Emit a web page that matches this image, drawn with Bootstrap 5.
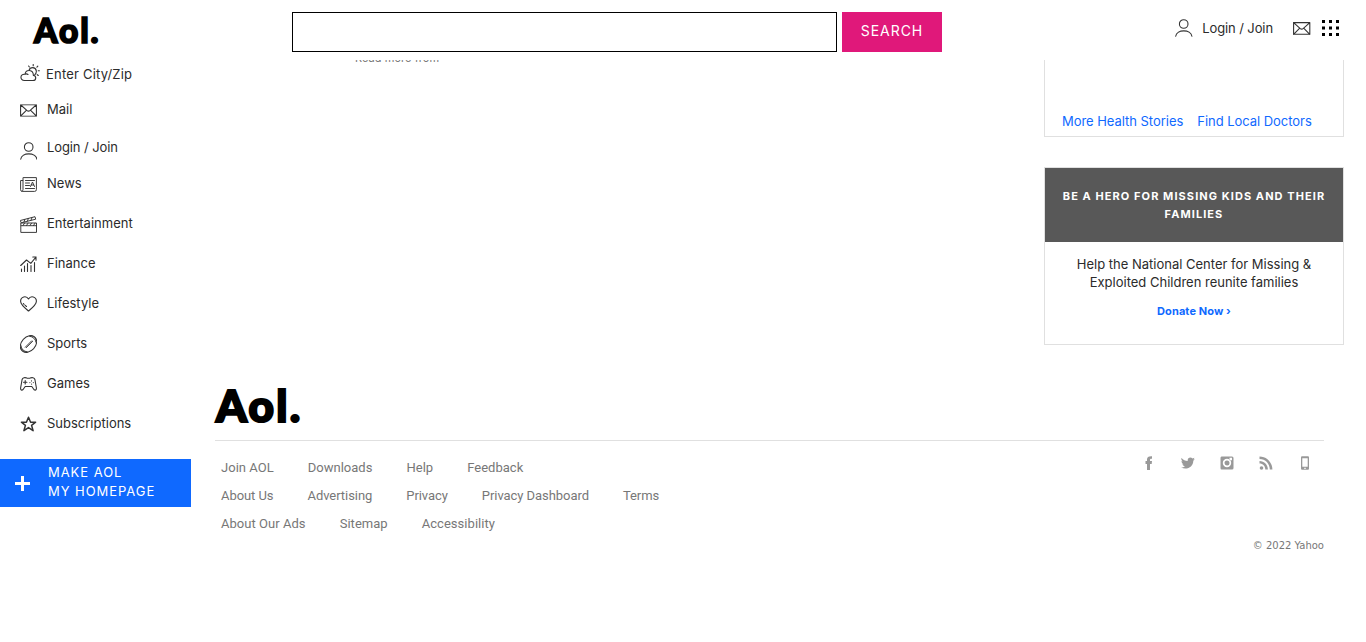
<!DOCTYPE html>
<html lang="en">
<head>
<meta charset="utf-8">
<meta name="viewport" content="width=device-width, initial-scale=1">
<title>AOL</title>
<link href="https://cdn.jsdelivr.net/npm/bootstrap@5.3.0/dist/css/bootstrap.min.css" rel="stylesheet">
<style>
body{font-family:Inter,"Liberation Sans",sans-serif;font-size:13px;line-height:18px;color:#2b2b2b;background:#fff;overflow:hidden}
a{text-decoration:none;color:inherit}
svg{display:block;flex:none}
.line-icon{fill:none;stroke:#333;stroke-width:1.1;stroke-linecap:round;stroke-linejoin:round}
.fine{stroke-width:.95}
.bold-line{stroke-width:1.5}
.logo-text{font-family:Lato,sans-serif;font-weight:900;fill:#000;stroke:#000}
.logo-sm{font-size:33.5px;stroke-width:1.7px;letter-spacing:1.9px}
.logo-lg{font-size:44px;stroke-width:2.2px;letter-spacing:2.3px}
.topbar{height:60px;background:#fff}
.top-logo{width:292px;padding:12px 0 0 33px}
.search-box{width:545px;height:40px;border:1px solid #000;border-radius:0;margin-top:12px}
.search-btn{width:100px;height:40px;margin:12px 0 0 5px;padding:0 0 2px;border:0;border-radius:0;background:#e0187a;color:#fff;font-size:14px;line-height:36px;letter-spacing:.95px}
.account{margin-right:26px;padding-top:19px;height:38px}
.account-link{margin:0 20px 0 9px;letter-spacing:-.1px}
.mail-icon{margin-top:3px}
.apps-icon{margin-left:11px}
.side{width:191px;flex:none}
.side a{padding-left:20px;letter-spacing:0}
.side .side-item{height:40px;gap:10px}
.side .side-item svg{margin-top:2px}
.side .r-weather{height:28px;gap:6px;letter-spacing:.2px}
.side .r-weather svg{margin-top:-2px}
.side .r-mail{height:42px}
.side .r-login{height:34px;letter-spacing:-.1px}
.side .r-login svg{margin-top:7px}
.side .r-news{height:39px;padding-bottom:1px}
.side .home-btn{margin-top:16px;height:48px;background:#0f69ff;color:#fff;line-height:19px;letter-spacing:.95px;padding-left:15px;gap:18px}
.home-btn span{margin-top:-2px}
.page{padding-top:60px}
.main-row{height:285px}
.read-more{font-size:11px;color:#777;line-height:14px;margin:-9px 0 0 164px;letter-spacing:.05px}
.rail{width:300px;margin-right:22px}
.panel{border:1px solid #e0e0e0}
.health{height:77px;border-top:0;padding:0 0 6px 17px;gap:14px;color:#0f69ff;letter-spacing:-.04px}
.hero{margin-top:30px;height:178px}
.hero-head{height:74px;background:#585858;color:#fff;font-size:11px;font-weight:700;letter-spacing:1.07px}
.hero-body{padding:13px 0 10px}
.hero-link{color:#0f69ff;font-size:11px;font-weight:700;letter-spacing:.1px}
.foot{margin:43px 42px 0 24px}
.foot-row{border-top:1px solid #e0e0e0;padding:13px 0 0 6px;color:#777;margin-top:10px}
.foot-links{font-family:Roboto,sans-serif;line-height:28px}
.foot-links div{gap:34px}
.foot-links .f-1{letter-spacing:.02px}
.foot-links .f-2{letter-spacing:-.06px}
.foot-links .f-3{letter-spacing:.04px}
.social{gap:25px;margin:2px 12px 0 0;fill:#999;height:14px}
.copy{font-family:"DejaVu Sans",sans-serif;font-size:10px;color:#777;margin-top:-1px}
</style>
</head>
<body>
<svg class="d-none">
  <symbol id="i-user" viewBox="0 0 18 18"><circle cx="8.7" cy="5" r="4.3"/><path d="M.7 17.3c.9-7.3 15.300-7.300 16.200 0"/></symbol>
  <symbol id="i-mail" viewBox="0 0 18 13"><path d="M.6.6h16.200v11.700H.6zM.6.6l6.400 5.800c1.200 1 2.200 1 3.400 0L16.800.6M.6 12.300l5.900-6M16.800 12.300l-5.900-6"/></symbol>
</svg>

<header class="topbar fixed-top d-flex align-items-start">
  <a class="top-logo" href="#"><svg width="90" height="46" overflow="visible" role="img" aria-label="Aol"><text class="logo-text logo-sm" y="31" x="1">Aol.</text></svg></a>
  <input class="search-box form-control shadow-none" type="text" aria-label="Search">
  <button class="search-btn btn">SEARCH</button>
  <div class="account d-flex align-items-start ms-auto">
    <svg class="line-icon" width="18" height="18"><use href="#i-user"/></svg>
    <a class="account-link" href="#">Login / Join</a>
    <svg class="line-icon mail-icon" width="18" height="13"><use href="#i-mail"/></svg>
    <svg class="apps-icon" width="18" height="18"><path d="M0 1h3v3H0zM7 1h3v3H7zM14 1h3v3h-3zM0 7.500h3v3H0zM7 7.500h3v3H7zM14 7.500h3v3h-3zM0 14h3v3H0zM7 14h3v3H7zM14 14h3v3h-3z"/></svg>
  </div>
</header>

<div class="page d-flex">
  <nav class="side d-flex flex-column">
    <a class="side-item r-weather d-flex align-items-center" href="#"><svg class="line-icon" width="20" height="18" viewBox="0 0 20 18"><path d="M4.500 16.500h8.500c3.500 0 3.600-4.700.4-5C13.300 5.200 5.800 5 5 10.300 0 9.500-.6 16.200 4.500 16.500zM8 10.500c-1-.8-2-.8-3-.2M9 6.500c1-3.700 6.600-4 7.300.3.200 1.700-.4 3-1.600 4M13.200.5v1.200M8.600 2l.8 1M17.800 2.200l-.9.900M19.400 6.800h-1.200M18.300 11.500l-1-.8"/></svg>Enter City/Zip</a>
    <a class="side-item r-mail d-flex align-items-center" href="#"><svg class="line-icon" width="17" height="13" viewBox="0 0 17.400 13"><use href="#i-mail" width="18" height="13"/></svg>Mail</a>
    <a class="side-item r-login d-flex align-items-center" href="#"><svg class="line-icon" width="17" height="18"><use href="#i-user" width="18" height="18"/></svg>Login / Join</a>
    <a class="side-item r-news d-flex align-items-center" href="#"><svg class="line-icon fine" width="17" height="15"><path d="M3.500.6h12.900v12q0 1.800-1.800 1.800H2.200Q.6 14.400.6 12.700V3.500h2.200M3 1v11.500q0 1.500-1 1.900M5.500 3.500h9M5.500 6h4M5.500 8.500h4M5.500 11.500h9M10.500 9.500L12.500 5l2 4.500M11.200 8h2.500"/></svg>News</a>
    <a class="side-item d-flex align-items-center" href="#"><svg class="line-icon fine" width="17" height="17"><path d="M1.200 7h15.300v9.400H1.200zM1.200 9.700h15.300M.7 4.400L15 .7l.7 2.500L1.500 6.700zM4 6l.8-2.500M7.500 5l.8-2.500M11 4.200l1-2.500M3 9.500l1.500-2.300M6.500 9.500L8 7.200M10 9.500l1.500-2.300M13.500 9.500L15 7.200"/></svg>Entertainment</a>
    <a class="side-item d-flex align-items-center" href="#"><svg class="line-icon" width="17" height="16"><path d="M.7 9.500L6.500 4l4.300 3.400L16 1M12.800 1H16v3.200M1.500 13v2.500M4.500 10v5.500M7.500 7.500v8M11 9.500v6M14.500 6.500v9"/></svg>Finance</a>
    <a class="side-item d-flex align-items-center" href="#"><svg class="line-icon" width="17" height="16"><path d="M8.500 15C4 11.300.6 8.600.6 5.200.6.500 6.300-.8 8.500 3c2.200-3.800 7.900-2.500 7.900 2.200 0 3.400-3.400 6.100-7.900 9.800z"/><path d="M3.400 7.500q1 1.500 3.700 3.500" stroke-dasharray="1.500 1.500"/></svg>Lifestyle</a>
    <a class="side-item d-flex align-items-center" href="#"><svg class="line-icon fine" width="17" height="18"><ellipse cx="8.500" cy="9" rx="9.400" ry="7" transform="rotate(-48 8.500 9)"/><path d="M5.300 12.200l6.400-6.400M6.200 12.700l6.400-6.400M9.500 1.200c3.700.5 6 2.800 6.600 6.200M11.500.9c3 .4 4.500 2 4.800 4.700M.9 10.600c.4 3.700 2.800 6 6.400 6.200M.8 12.800c.4 2.500 2 4 4.500 4.200"/></svg>Sports</a>
    <a class="side-item d-flex align-items-center" href="#"><svg class="line-icon" width="17" height="14"><path d="M4 .7q2.200-.2 3 .5h3q.8-.7 3-.5 1.500.2 1.900 1.800l1.500 8.500c.2 2.600-2 2.800-3 .8L11.800 9.500H5.200l-1.600 2.300c-1 2-3.200 1.800-3-.8l1.500-8.500Q2.500.9 4 .7zM5.200 3.500v3.400M3.500 5.200h3.400M11.500 3.800v.1M9.900 5.500v.1M13.300 5.500v.1M11.600 7v.1"/></svg>Games</a>
    <a class="side-item d-flex align-items-center" href="#"><svg class="line-icon bold-line" width="17" height="16"><path d="M8.500 1.200l2.100 5h5l-4 3.200 1.500 5.300-4.600-3.100-4.600 3.100 1.500-5.300-4-3.200h5z"/></svg>Subscriptions</a>
    <a class="home-btn d-flex align-items-center" href="#"><svg width="15" height="15"><path d="M6 0h3v6h6v3H9v6H6V9H0V6h6z" fill="#fff"/></svg><span>MAKE AOL<br>MY HOMEPAGE</span></a>
  </nav>

  <div class="flex-grow-1">
    <div class="main-row d-flex justify-content-between">
      <div class="read-more">Read more from</div>
      <aside class="rail">
        <div class="panel health d-flex align-items-end"><a href="#">More Health Stories</a><a href="#">Find Local Doctors</a></div>
        <div class="panel hero text-center">
          <div class="hero-head d-flex align-items-center justify-content-center">BE A HERO FOR MISSING KIDS AND THEIR<br>FAMILIES</div>
          <div class="hero-body">Help the National Center for Missing &amp;<br>Exploited Children reunite families</div>
          <a class="hero-link" href="#">Donate Now ›</a>
        </div>
      </aside>
    </div>
    <footer class="foot">
      <svg width="110" height="42" overflow="visible" role="img" aria-label="Aol"><text class="logo-text logo-lg" y="34" x="1">Aol.</text></svg>
      <div class="foot-row d-flex justify-content-between">
        <div class="foot-links">
          <div class="d-flex f-1"><a href="#">Join AOL</a><a href="#">Downloads</a><a href="#">Help</a><a href="#">Feedback</a></div>
          <div class="d-flex f-2"><a href="#">About Us</a><a href="#">Advertising</a><a href="#">Privacy</a><a href="#">Privacy Dashboard</a><a href="#">Terms</a></div>
          <div class="d-flex f-3"><a href="#">About Our Ads</a><a href="#">Sitemap</a><a href="#">Accessibility</a></div>
        </div>
        <div class="social d-flex">
          <svg width="14" height="14"><path d="M5 14V8H3.500V5H5V3.500C5 1.200 6.500 0 10 .2v2.500C8.500 2.500 8 2.900 8 4v1h2l-.3 3H8v6z"/></svg>
          <svg width="14" height="14"><path d="M.5 2C2.200 4 4.200 4.800 6.700 5 6.300 1.500 9.800.7 11.500 2.500l2-.7-1 1.700 1.300-.3-1.500 1.600C12.200 11 6 14.500 0 11.500c1.800 0 2.900-.4 4-1.200-1.500-.2-2.200-.9-2.600-2h1.200C1.200 7.600.5 6.600.5 5l1.200.4C.4 4.500 0 3.300.5 2z"/></svg>
          <svg width="14" height="14"><path fill-rule="evenodd" d="M1.500.5h10.500Q13.500.5 13.500 2v10q0 1.500-1.500 1.500H1.500Q.5 13.500.5 12V2Q.5.500 1.500.500zM9.500 1.800v2.400H12V1.800zM7 2.800a4.200 4.200 0 100 8.400 4.200 4.200 0 000-8.400zM7 4.500a2.500 2.500 0 110 5 2.500 2.500 0 010-5z"/></svg>
          <svg width="14" height="14"><circle cx="2.500" cy="12" r="1.800"/><path d="M.5 5v2.600c3.400 0 5.800 2.600 5.800 6h2.600C8.900 8.700 5.300 5 .5 5zM.5.500V3c6 0 10.300 4.700 10.300 10.600h2.600C13.400 6.300 7.700.500.500.500z"/></svg>
          <svg width="14" height="14"><path fill-rule="evenodd" d="M4 .3h6Q11 .3 11 1.500v11q0 1.200-1 1.200H4q-1 0-1-1.200v-11Q3 .3 4 .3zM4.300 2.200v8.600h5.400V2.200zM6.300 11.700v1.200h1.400v-1.200z"/></svg>
        </div>
      </div>
      <div class="copy text-end">© 2022 Yahoo</div>
    </footer>
  </div>
</div>
<script src="https://cdn.jsdelivr.net/npm/bootstrap@5.3.0/dist/js/bootstrap.bundle.min.js"></script>
</body>
</html>
